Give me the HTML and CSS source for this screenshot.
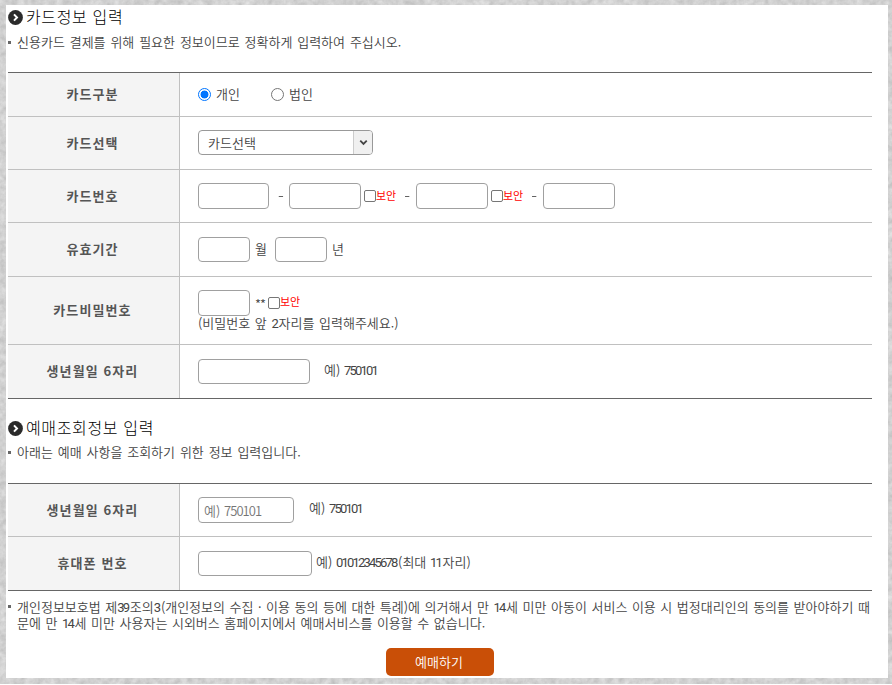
FILE: index.html
```html
<!DOCTYPE html>
<html lang="ko">
<head>
<meta charset="utf-8">
<title>카드정보 입력</title>
<link rel="stylesheet" href="styles.css">
</head>
<body>
<svg class="texture" width="892" height="684" aria-hidden="true">
  <filter id="stone" x="0" y="0" width="100%" height="100%" color-interpolation-filters="sRGB">
    <feTurbulence type="fractalNoise" baseFrequency="0.16" numOctaves="3" seed="4"/>
    <feColorMatrix values="0.18 0 0 0 0.73  0.18 0 0 0 0.73  0.18 0 0 0 0.73  0 0 0 0 1"/>
  </filter>
  <rect width="892" height="684" filter="url(#stone)"/>
</svg>
<main class="sheet">
  <section>
    <h2 class="title"><svg class="bullet" viewBox="0 0 15 15"><circle cx="7.5" cy="7.5" r="7.4"/><path d="M6 4.4 9 7.5 6 10.6"/></svg><span class="heading">카드정보 입력</span></h2>
    <p class="note"><i></i><span>신용카드 결제를 위해 필요한 정보이므로 정확하게 입력하여 주십시오.</span></p>
    <div class="form card">
      <div class="row r44"><div class="label">카드구분</div><div class="cell">
        <span class="radio on"></span><span class="radio-text">개인</span><span class="radio second"></span><span class="radio-text">법인</span>
      </div></div>
      <div class="row r53"><div class="label">카드선택</div><div class="cell up">
        <div class="select"><span>카드선택</span><b><svg viewBox="0 0 10 7"><path d="M1.4 1.3 5 5 8.6 1.3"/></svg></b></div>
      </div></div>
      <div class="row r53"><div class="label">카드번호</div><div class="cell">
        <span class="box w71"></span><span class="dash first">-</span><span class="box w72"></span><span class="check"></span><span class="secure">보안</span><span class="dash">-</span><span class="box w72"></span><span class="check"></span><span class="secure">보안</span><span class="dash">-</span><span class="box w72"></span>
      </div></div>
      <div class="row r54"><div class="label">유효기간</div><div class="cell">
        <span class="box short w52"></span><span class="unit">월</span><span class="box short w52"></span><span class="unit">년</span>
      </div></div>
      <div class="row r68"><div class="label">카드비밀번호</div><div class="cell stack">
        <div class="line"><span class="box w52"></span><span class="stars">**</span><span class="check pw"></span><span class="secure">보안</span></div>
        <div class="hint">(비밀번호 앞 <span class="num">2</span>자리를 입력해주세요.)</div>
      </div></div>
      <div class="row r54 last"><div class="label">생년월일 6자리</div><div class="cell">
        <span class="box short w112"></span><span class="example gap">예) <span class="num">750101</span></span>
      </div></div>
    </div>
  </section>
  <section class="lookup">
    <h2 class="title"><svg class="bullet" viewBox="0 0 15 15"><circle cx="7.5" cy="7.5" r="7.4"/><path d="M6 4.4 9 7.5 6 10.6"/></svg><span class="heading">예매조회정보 입력</span></h2>
    <p class="note"><i></i><span>아래는 예매 사항을 조회하기 위한 정보 입력입니다.</span></p>
    <div class="form">
      <div class="row r53"><div class="label">생년월일 6자리</div><div class="cell">
        <span class="box w96"><span class="ph">예) <span class="phnum">750101</span></span></span><span class="example gap raised">예) <span class="num">750101</span></span>
      </div></div>
      <div class="row r54 last"><div class="label">휴대폰 번호</div><div class="cell">
        <span class="box short w114"></span><span class="example">예) <span class="num">01012345678</span>(최대 <span class="num">11</span>자리)</span>
      </div></div>
    </div>
  </section>
  <div class="notice"><i></i><p><span class="l1">개인정보보호법 제<span class="num">39</span>조의<span class="num">3</span>(개인정보의 수집 · 이용 동의 등에 대한 특례)에 의거해서 만 <span class="num">14</span>세 미만 아동이 서비스 이용 시 법정대리인의 동의를 받아야하기 때</span><span class="l2">문에 만 <span class="num">14</span>세 미만 사용자는 시외버스 홈페이지에서 예매서비스를 이용할 수 없습니다.</span></p></div>
  <button class="submit" type="button">예매하기</button>
</main>
</body>
</html>
```
FILE: styles.css
```css
* { box-sizing: border-box; }
html { background: #fff; }
body {
  margin: 0; width: 892px; height: 685px; overflow: hidden;
  padding: 5px 4px 7px 6px;
  font: 350 13px/15px "Noto Sans CJK KR", sans-serif; color: #444;
}
.texture { position: absolute; left: 0; top: 0; z-index: -1; }
.sheet { background: #fff; height: 673px; padding: 0 16px 0 2px; overflow: hidden; }
.title {
  display: flex; align-items: center; height: 24px; margin: 0;
  font-size: 16px; line-height: 24px; font-weight: 300; color: #000; white-space: nowrap;
}
.heading { letter-spacing: 0.65px; padding-bottom: 2px; }
.bullet { width: 15px; height: 15px; margin-right: 3px; }
.bullet circle { fill: #2b2b2b; }
.bullet path { fill: none; stroke: #fff; stroke-width: 2; }
.note { display: flex; align-items: center; margin: 0; height: 26px; white-space: nowrap; word-spacing: 1.2px; }
.note span { padding-bottom: 2px; }
.note i, .notice i { flex: none; width: 3px; height: 3px; background: #666; margin-right: 6px; }
.form { margin-top: 17px; width: 864px; border-top: 1px solid #666; border-bottom: 1px solid #666; }
.row { display: flex; border-bottom: 1px solid #c0c0c0; }
.row.last { border-bottom: 0; }
.r44 { height: 44px; }
.r53 { height: 53px; }
.r54 { height: 54px; }
.r68 { height: 68px; }
.r54.last { height: 53px; }
.label {
  width: 172px; background: #f4f4f4; border-right: 1px solid #c0c0c0;
  display: flex; align-items: center; justify-content: center; padding: 0 2px 2px 0;
  font-weight: 700; letter-spacing: 1.1px; color: #555;
}
.cell { flex: 1; display: flex; align-items: center; padding-left: 18px; white-space: nowrap; }
.cell.up { padding-bottom: 2px; }
.radio { width: 13px; height: 13px; border: 1px solid #767676; border-radius: 50%; background: #fff; }
.radio.on { border: 1.5px solid #0075ff; background: radial-gradient(circle, #0075ff 3.6px, #fff 4.3px); }
.radio.second { margin-left: 31px; }
.radio-text { margin-left: 5px; width: 24px; padding-bottom: 2px; }
.select {
  display: flex; width: 175px; height: 25px; border: 1px solid #999; border-radius: 4px;
  overflow: hidden; align-items: center; padding-left: 9px; background: #fff;
}
.select b {
  margin-left: auto; width: 19px; height: 23px; background: #f0f0f0; border-left: 1px solid #ccc;
  display: flex; align-items: center; justify-content: center;
}
.select svg { width: 9px; height: 7px; }
.select path { fill: none; stroke: #444; stroke-width: 2; }
.box { height: 26px; border: 1px solid #a0a0a0; border-radius: 4px; background: #fff; display: flex; align-items: center; }
.box.short { height: 25px; }
.w52 { width: 52px; }
.w71 { width: 71px; }
.w72 { width: 72px; }
.w96 { width: 96px; padding-left: 5px; }
.w112 { width: 112px; }
.w114 { width: 114px; }
.dash { width: 19px; text-align: center; padding: 0 0 2px 1px; transform: scaleX(1.3); }
.dash.first { width: 20px; padding-left: 3px; }
.check { width: 12px; height: 12px; border: 1px solid #767676; border-radius: 2px; margin-left: 3px; background: #fff; }
.secure { width: 21px; padding-bottom: 2px; font-size: 11px; font-weight: 400; color: #f00; }
.unit { margin: 0 8px 0 5px; width: 12px; padding-bottom: 3px; }
.stack { flex-direction: column; align-items: flex-start; justify-content: flex-start; padding-top: 13px; }
.line { display: flex; align-items: center; height: 26px; }
.line .secure { padding-bottom: 4px; }
.stars { width: 12px; margin-left: 5px; letter-spacing: -1px; }
.check.pw { margin-left: 1px; }
.hint { word-spacing: 1px; margin-top: -1px; }
.num { font-family: Roboto, sans-serif; font-weight: 400; letter-spacing: -1.8px; margin-right: 1.6px; }
.example { margin-left: 4px; padding-bottom: 3px; }
.example.gap { margin-left: 14px; }
.example.raised { margin-left: 15px; padding-bottom: 4px; }
.ph { color: #757575; }
.phnum { letter-spacing: -0.9px; }
.lookup { margin-top: 17px; }
.lookup .note span { padding-bottom: 4px; }
.lookup .note i { margin-bottom: 2px; }
.notice { display: flex; padding-top: 8px; height: 57px; white-space: nowrap; word-spacing: 0.9px; }
.notice i { margin-top: 6px; }
.notice p { margin: 0; }
.notice p > span { display: block; width: max-content; }
.submit {
  display: block; width: 108px; height: 28px; margin: 0 0 0 378px; padding: 0 2px 2px 0;
  border: 0; border-radius: 5px; background: #c94f07; color: #fff; font: inherit;
}
```
